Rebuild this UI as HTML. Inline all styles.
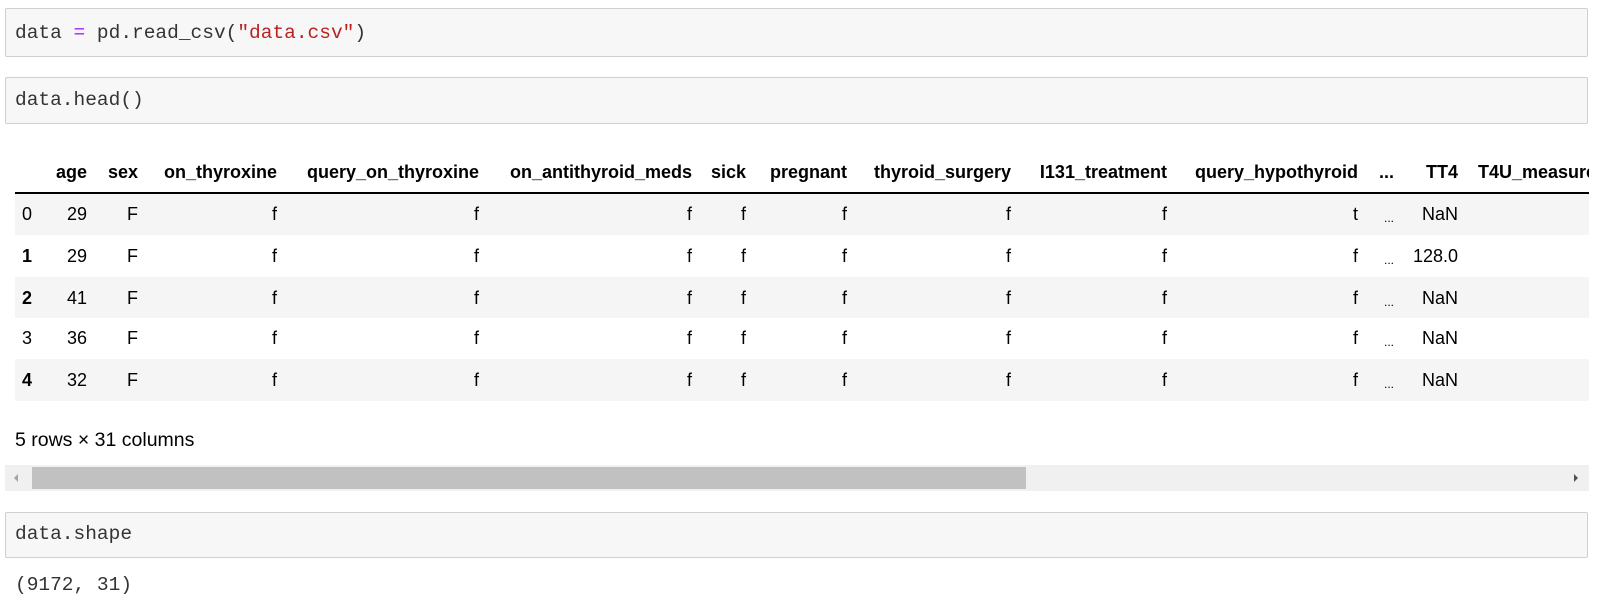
<!DOCTYPE html>
<html><head><meta charset="utf-8"><style>
body{margin:0;width:1600px;height:608px;background:#fff;position:relative;overflow:hidden;font-family:"Liberation Sans",Arial,sans-serif;color:#000}
.box{position:absolute;left:5px;width:1581px;background:#f7f7f7;border:1px solid #cfcfcf;border-radius:2px}
.code{position:absolute;left:15px;font-family:"Liberation Mono","DejaVu Sans Mono",monospace;font-size:19.5px;color:#333;white-space:pre;line-height:24px}
.t{position:absolute;white-space:nowrap;font-size:18px;line-height:22px}
.h{font-weight:bold}
.r{text-align:right}
.band{position:absolute;left:15px;width:1574px;background:#f5f5f5}
</style></head><body>
<div class="box" style="top:8px;height:47px"></div>
<div class="code" style="top:21px">data <span style="color:#aa22ff">=</span> pd.read_csv(<span style="color:#ba2121">"data.csv"</span>)</div>
<div class="box" style="top:77px;height:45px"></div>
<div class="code" style="top:88px">data.head()</div>

<div style="position:absolute;left:15px;width:1574px;top:192px;height:2px;background:#000"></div>
<div class="band" style="top:194px;height:41px"></div>
<div class="band" style="top:277px;height:41px"></div>
<div class="band" style="top:359px;height:42px"></div>

<div id="tbl"></div>
<div class="t" style="top:429px;left:15px;font-size:19.5px">5 rows × 31 columns</div>

<div style="position:absolute;left:5px;width:1584px;top:465px;height:26px;background:#f0f0f0"></div>
<div style="position:absolute;left:32px;width:994px;top:467px;height:22px;background:#c1c1c1"></div>
<div style="position:absolute;left:14px;top:474px;width:0;height:0;border-top:4px solid transparent;border-bottom:4px solid transparent;border-right:4px solid #a3a3a3"></div>
<div style="position:absolute;left:1574px;top:474px;width:0;height:0;border-top:4px solid transparent;border-bottom:4px solid transparent;border-left:4px solid #505050"></div>

<div class="box" style="top:512px;height:44px"></div>
<div class="code" style="top:522px">data.shape</div>
<div class="code" style="top:573px">(9172, 31)</div>

<script>
var cols=[["age",87],["sex",138],["on_thyroxine",277],["query_on_thyroxine",479],["on_antithyroid_meds",692],["sick",746],["pregnant",847],["thyroid_surgery",1011],["I131_treatment",1167],["query_hypothyroid",1358],["...",1394],["TT4",1458]];
var rows=[["0","29","F","f","f","f","f","f","f","f","t","...","NaN"],["1","29","F","f","f","f","f","f","f","f","f","...","128.0"],["2","41","F","f","f","f","f","f","f","f","f","...","NaN"],["3","36","F","f","f","f","f","f","f","f","f","...","NaN"],["4","32","F","f","f","f","f","f","f","f","f","...","NaN"]];
var rowY=[214,256,298,338,380];
var h="";
cols.forEach(function(c){h+='<div class="t h r" style="top:161px;right:'+(1600-c[1])+'px">'+c[0]+'</div>';});
h+='<div class="t h" style="top:161px;left:1478px;width:111px;overflow:hidden">T4U_measured</div>';
rows.forEach(function(r,i){
 var y=rowY[i]-11;
 var b=(i==1||i==2||i==4)?'h ':'';
 h+='<div class="t '+b+'" style="top:'+y+'px;left:22px">'+r[0]+'</div>';
 for(var j=1;j<r.length;j++){
  var c=cols[j-1];
  var st=(c[0]=="...")?'font-size:12px;top:'+(y+4)+'px;':'top:'+y+'px;';
  h+='<div class="t r" style="'+st+'right:'+(1600-c[1])+'px">'+r[j]+'</div>';
 }
});
document.getElementById('tbl').innerHTML=h;
</script>
</body></html>
